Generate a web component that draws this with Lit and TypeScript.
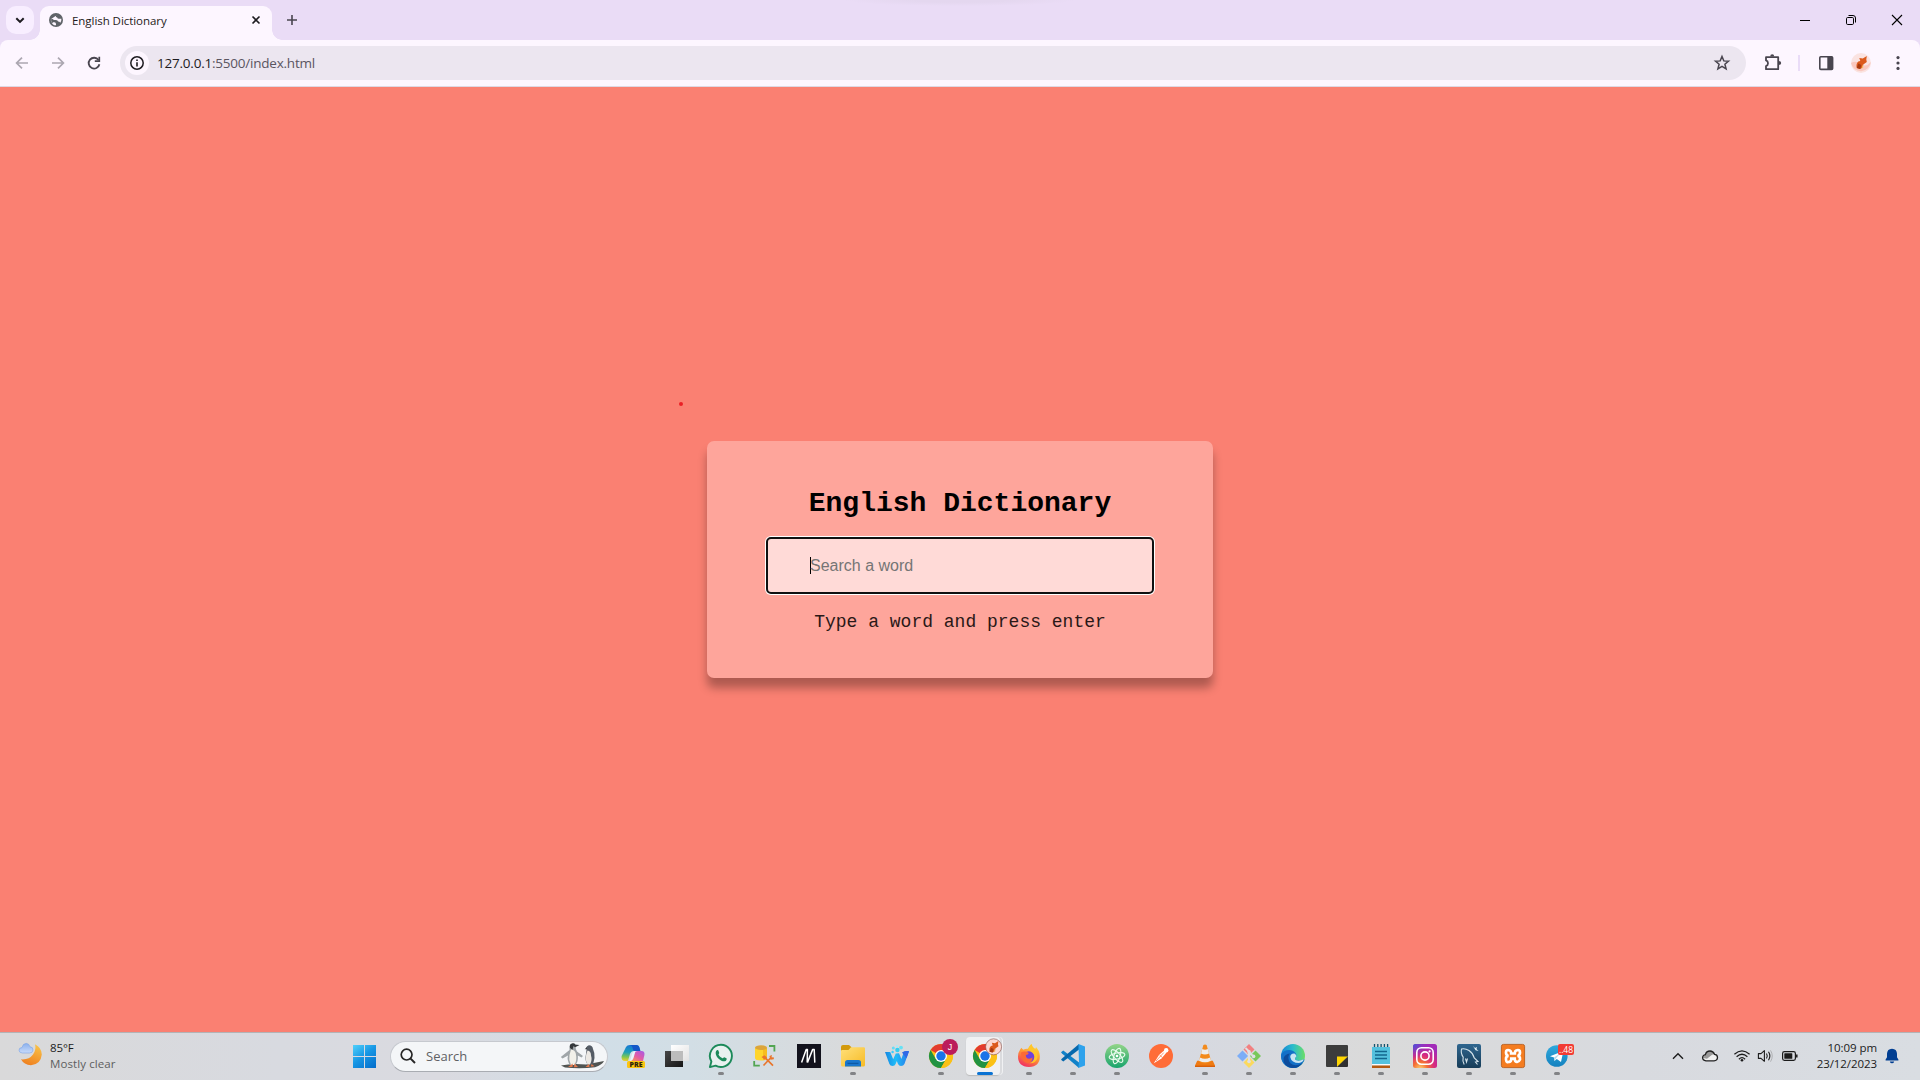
import { LitElement, html, svg, css, TemplateResult, SVGTemplateResult } from "lit";
import { customElement, state } from "lit/decorators.js";

interface TaskApp {
  name: string;
  art: SVGTemplateResult;
  running?: boolean;
  active?: boolean;
}

const chromeArt = svg`
  <circle cx="12" cy="12" r="12" fill="#fbc116"/>
  <path d="M12 12 1.6 6A12 12 0 0 1 22.4 6L12 6Z" fill="#e33b2e"/>
  <path d="M22.4 6H12L12 12Z" fill="#e33b2e"/>
  <path d="M1.6 6A12 12 0 0 0 12 24L17.2 15 12 12 6.8 15Z" fill="#229342"/>
  <path d="M22.4 6H12V12L17.2 15 12 24A12 12 0 0 0 22.4 6Z" fill="#fbc116"/>
  <circle cx="12" cy="12" r="6" fill="#fff"/>
  <circle cx="12" cy="12" r="4.7" fill="#1a73e8"/>`;

const dragonArt = svg`
  <path d="M-4.5 5.5C-5.5 2-4-1.5-1-1.5L-2-4.5 1.5-4 5.5-6.5 5-3 5.5-.5 2 2 1.5 5-1.5 6.5Z" fill="#dc5a1c"/>
  <path d="M-4.5 5.5-3 1 0 2.5-1 6.4Z" fill="#a83a12"/>
  <path d="M1.5 2 2 5 0 6.5Z" fill="#f2c26b"/>`;

const apps: TaskApp[] = [
  {
    name: "copilot",
    art: svg`
      <path d="M5 3Q6 1 9 1H15Q18 1 18.5 4L19 7H13Q10 7 9 10L7 17H4Q0 17 .6 12Z" fill="url(#cop1)"/>
      <path d="M9 1H15Q18 1 18.7 4.4L19.5 7H14Q12.5 7 12 5.5L11.4 3.2Q10.9 1.3 9 1Z" fill="#1457c8"/>
      <path d="M13 10Q14 7 17 7H20.5Q24 7 23.4 11L22 17H10Z" fill="url(#cop2)"/>
      <path d="M9 17 11 10Q12 7 14.5 7L12.5 14Q11.5 17 9 17Z" fill="#e9f3fb"/>
      <rect x="6" y="17" width="18" height="7" rx="1.6" fill="#fcc612"/>
      <text x="15" y="23" class="pre">PRE</text>`,
  },
  {
    name: "task-view",
    art: svg`
      <rect x="0" y="7" width="18" height="16" fill="url(#dark)"/>
      <rect x="6" y="1" width="18" height="16" fill="url(#pale)"/>
      <rect x="6" y="7" width="12" height="10" fill="#bcbcbc"/>`,
  },
  {
    name: "whatsapp",
    running: true,
    art: svg`
      <path d="M12 .8A11.1 11.1 0 1 1 6.6 21.7L.9 23.1 2.4 17.5A11.1 11.1 0 0 1 12 .8Z" fill="#e8f1ef" stroke="#1c8a5a" stroke-width="1.9" stroke-linejoin="round"/>
      <path d="M7.6 6.4C8.3 5.8 9.1 5.9 9.4 6.6L10.2 8.7C10.4 9.2 9.4 10.1 9.5 10.5 10.3 12.2 11.7 13.5 13.5 14.2 14 14.4 14.8 13 15.3 13.2L17.4 14.3C18.1 14.7 17.5 16.3 16.7 16.9 15 18 12.1 17 9.6 14.7 7 12.2 5.7 8.4 7.6 6.4Z" fill="#1c8a5a"/>`,
  },
  {
    name: "database-tools",
    art: svg`
      <path d="M2 4V14Q2 16.5 8 16.5T14 14V4Z" fill="#ffd52b"/>
      <path d="M10 4H14V14Q13 16 10 16.3Z" fill="#f7bd1e"/>
      <ellipse cx="8" cy="3.6" rx="6" ry="2.4" fill="#dca53a"/>
      <path d="M16 2H21.4V7.5M1.2 17V21.7H6.8" fill="none" stroke="#52a552" stroke-width="1.8"/>
      <path d="M10.5 21.5 18 13.5M11.5 13.2 20 21.7" stroke="#e8762d" stroke-width="1.7"/>
      <path d="M8.5 13 11.5 11.2 14 13.5 11.5 15.5ZM16.4 12 19 11 18.5 13.2 21 13.5 20.7 15.2 17.6 15.8Z" fill="#e8762d"/>`,
  },
  {
    name: "m-app",
    art: svg`
      <rect width="24" height="24" fill="#12121c"/>
      <path d="M4.6 18.6 9.2 5.6 10.4 5.6 10.2 18.6M10.4 18.6 15.6 5.6 17.2 5.6 17.8 18.6" fill="none" stroke="#fff" stroke-width="1.5" stroke-linejoin="round"/>`,
  },
  {
    name: "file-explorer",
    running: true,
    art: svg`
      <path d="M0 3Q0 1 2 1H8L10.5 3.2V7H0Z" fill="#d39a0c"/>
      <path d="M0 7Q0 6 1.2 6H7.5L10 3.2H22.8Q24 3.2 24 4.4V21Q24 22.5 22.5 22.5H1.5Q0 22.5 0 21Z" fill="url(#folder)"/>
      <path d="M4 22.5V18.5Q4 16 6.5 16H17.5Q20 16 20 18.5V22.5Z" fill="#1977cd"/>
      <path d="M6.5 19.4H17.5" stroke="#0d5aa5" stroke-width="1.3"/>`,
  },
  {
    name: "wave-w",
    art: svg`
      <path d="M0 8H5.2L8.2 15.2 10.8 9.5 14 9.3 16.4 15 18.8 8Q20 6.8 24 7.2L19.4 20Q18.5 22 16 22 14 22 13 20L11.8 17 10.6 20Q9.8 22 7.6 22 5.2 22 4.4 20Z" fill="url(#wave)"/>
      <path d="M17 8.5Q20 6.5 24 7.2L21.5 14.3Z" fill="#3168e6"/>
      <circle cx="12.4" cy="6" r="2.2" fill="#35cef1"/><circle cx="16" cy="3.6" r="1.9" fill="#67e1f4"/>
      <circle cx="8.3" cy="4" r="1.5" fill="#62dbf5"/><circle cx="12" cy="2" r="1" fill="#9defff"/><circle cx="7.6" cy="8" r="1.2" fill="#36cfff"/>`,
  },
  {
    name: "chrome-j",
    running: true,
    art: svg`${chromeArt}
      <circle cx="21" cy="3" r="8" fill="#bb1c5b"/>
      <text x="21" y="6" class="badge">J</text>`,
  },
  {
    name: "chrome-active",
    active: true,
    art: svg`${chromeArt}
      <circle cx="20.6" cy="2.8" r="8" fill="#fbd9d3" stroke="#83504a" stroke-width=".6"/>
      <g transform="translate(20.6 2.8) scale(.88)">${dragonArt}</g>`,
  },
  {
    name: "firefox",
    running: true,
    art: svg`
      <path d="M3.3 5.2 4.6 3.8Q5.2 5.2 6.4 5.8 8.5 4.5 11 4.8 12 2.5 14.4 0 15 3 18 5Q19 4 19 3 22.6 6.6 22.9 12 22.9 22.8 12 23 1 22.5 1 12.5 1 8.5 3.3 5.2Z" fill="url(#fox)"/>
      <path d="M14.4 0Q15 3 18 5 21.2 9 20.4 14 18.8 19.5 12.5 19.2 18.5 17 16.8 11.5 15 8 11 4.8 12 2.5 14.4 0Z" fill="#ffc62b"/>
      <circle cx="11.8" cy="12.8" r="5.5" fill="#7042dc"/>
      <path d="M4 8.5Q8 6.5 11.8 9 11.3 10.8 8.8 11 8.8 14.8 12.3 14.7 14.5 14.5 15.5 13.2 15.5 18.6 10.7 19.2 4 18 4 8.5Z" fill="#fb6a36"/>`,
  },
  {
    name: "vscode",
    running: true,
    art: svg`
      <path d="M0 8.2 2.3 6.6 18 18.5V24L1 9.6Z" fill="#1182c9"/>
      <path d="M0 15.8 2.3 17.4 18 5.5V0L1 14.4Z" fill="#0668ad"/>
      <path d="M17.4 0 24 2.6V21.4L17.4 24 18 18Z" fill="#2ea2ec"/>`,
  },
  {
    name: "atom",
    running: true,
    art: svg`
      <circle cx="12" cy="12" r="12" fill="url(#atom)"/>
      <g fill="none" stroke="#e9fbee" stroke-width="1.15">
        <ellipse cx="12" cy="12" rx="8" ry="3.1" transform="rotate(-12 12 12)"/>
        <ellipse cx="12" cy="12" rx="8" ry="3.1" transform="rotate(48 12 12)"/>
        <ellipse cx="12" cy="12" rx="8" ry="3.1" transform="rotate(108 12 12)"/>
      </g>
      <circle cx="12" cy="12" r="1.3" fill="#fff"/>`,
  },
  {
    name: "postman",
    art: svg`
      <circle cx="12" cy="12" r="12" fill="#ff6c37"/>
      <path d="M4.8 19.2 10.2 10.7 15.4 6.3 17.5 8.6 12.5 14.6Z" fill="#fff"/>
      <circle cx="17.2" cy="6.3" r="2.2" fill="#fff"/>
      <path d="M10.5 11 13.5 13.6M7 17 14.8 8.6" stroke="#ff6c37" stroke-width=".7"/>`,
  },
  {
    name: "vlc",
    running: true,
    art: svg`
      <path d="M4.2 16.8H19.8L22 21.5V23H2V21.5Z" fill="#ef7a12"/>
      <path d="M2 21.6H22V23H2Z" fill="#d85f08"/>
      <path d="M10.4 1Q12 .2 13.6 1L18.3 17.5Q12 21.5 5.7 17.5Z" fill="#f38b1c"/>
      <path d="M9.3 5.1Q12 6.4 14.8 5.1L16 9.5Q12 11.4 8 9.5ZM6.9 13.4Q12 16 17.1 13.4L18 16.7Q12 20 6 16.7Z" fill="#ededed"/>`,
  },
  {
    name: "git",
    running: true,
    art: svg`
      <path d="M12 0 17.5 5.5 12 11 6.5 5.5Z" fill="#f28080"/><path d="M18.5 6.5 24 12 18.5 17.5 13 12Z" fill="#79c85b"/>
      <path d="M12 13 17.5 18.5 12 24 6.5 18.5Z" fill="#fbd95d"/><path d="M5.5 6.5 11 12 5.5 17.5 0 12Z" fill="#7cadf7"/>
      <path d="M8.5 4 12 7.5V18M12 8 16.5 12.5" fill="none" stroke="#dfe0e4" stroke-width="2"/>
      <circle cx="12" cy="7.8" r="1.8" fill="#dfe0e4"/><circle cx="12" cy="17.5" r="1.8" fill="#dfe0e4"/><circle cx="16.6" cy="12.4" r="1.8" fill="#dfe0e4"/>`,
  },
  {
    name: "edge",
    running: true,
    art: svg`
      <circle cx="12" cy="12" r="12" fill="url(#edge1)"/>
      <path d="M.1 11Q2 6 8.5 6 14 6.5 15.4 11 15.5 12.5 14 14 13.4 15.5 16 16.4 20 17 22.8 15.2 24 15 23 17A12 12 0 0 1 .1 11Z" fill="#1370c8"/>
      <path d="M8.8 9.5Q5.5 14.5 9.5 19.2 14 23.3 21.5 19 17.5 24.6 11 24 1.5 22 2.6 14 4 10.3 8.8 9.5Z" fill="#0d4c9c"/>
      <path d="M9.2 13Q9.4 9.2 13.5 9.5 15.8 10.8 15.3 12.5 13 14.6 14.7 16 18 17.6 22.8 15.2 22 18.3 18 19 10.5 19 9.2 13Z" fill="#c9e4f2"/>`,
  },
  {
    name: "sticky-notes",
    running: true,
    art: svg`
      <path d="M1 2Q1 1 2 1H22Q23 1 23 2V12.5L12 23H2Q1 23 1 22Z" fill="#3c3c3c"/>
      <path d="M12 12.5H23L12 23Z" fill="#ffd500"/><path d="M23 12.5V22Q23 23 22 23H12Z" fill="#303030"/>`,
  },
  {
    name: "notepad",
    running: true,
    art: svg`
      <path d="M3 3H21V20H3Z" fill="#54c1de"/><path d="M3 20H21V21.5H3Z" fill="#fafafa"/><path d="M3 21.5H21V24H3Z" fill="#b35a12"/>
      <path d="M5.5 0V3M8.8 0V3M12.1 0V3M15.4 0V3M18.6 0V3" stroke="#15536e" stroke-width="1.3"/>
      <path d="M6 7.5H18M6 11H18M6 14.5H18" stroke="#12678e" stroke-width="1.5"/>`,
  },
  {
    name: "instagram",
    running: true,
    art: svg`
      <rect width="24" height="24" rx="2.5" fill="url(#ig1)"/><rect width="24" height="24" rx="2.5" fill="url(#ig2)"/>
      <rect x="3.8" y="3.8" width="16.4" height="16.4" rx="4.6" fill="none" stroke="#fff" stroke-width="1.6"/>
      <circle cx="12" cy="12" r="4.1" fill="none" stroke="#fff" stroke-width="1.6"/><circle cx="16.6" cy="7.4" r="1.1" fill="#fff"/>`,
  },
  {
    name: "mysql-workbench",
    running: true,
    art: svg`
      <rect width="24" height="24" rx="2" fill="url(#my)"/>
      <path d="M7.2 20.5Q5.2 17 6.2 13 3.5 9.5 4.5 5 8 4 12 6.5 16 9.2 17.3 14L21 17.5 18.5 18 20.5 20.5M8.5 14.5 9.5 18 10.5 14.5" fill="none" stroke="#d4e2ea" stroke-width="1.1"/>
      <path d="M16 2 18 4 20 3 19.5 5 21.5 7 18.6 6.2Z" fill="#e7f3f8"/>`,
  },
  {
    name: "xampp",
    running: true,
    art: svg`
      <rect x=".4" y=".4" width="23.2" height="23.2" rx="2" fill="#f47c20" stroke="#b95d1c" stroke-width=".9"/>
      <path d="M8 6.2Q5 5.5 5 8.5T7.6 12Q4.7 12 5 15.5T8.3 17.8Q10.4 17.4 10.3 14.7H13.7Q13.6 17.4 15.7 17.8T19 15.5Q19.3 12 16.4 12 19 11.5 19 8.5T16 6.2Q13.7 6.7 13.8 9.5H10.2Q10.3 6.7 8 6.2Z" fill="none" stroke="#fff" stroke-width="2.7"/>`,
  },
  {
    name: "telegram",
    running: true,
    art: svg`
      <circle cx="11.8" cy="12" r="10.8" fill="url(#tg)"/>
      <path d="M5 12.2 18.4 7 16 18 11.8 15 9.5 17 9 13.5Z" fill="#fff"/><path d="M9.1 13.5 15.6 9 11 14.2 9.5 17Z" fill="#b5d7ea"/>
      <rect x="13" y="0" width="16" height="11" rx="2" fill="#f23c34"/>
      <text x="21" y="8.6" class="count">..48</text>`,
  },
];

const defs = svg`
  <linearGradient id="cop1" x1=".3" y1="0" x2=".2" y2="1"><stop stop-color="#1877d4"/><stop offset=".45" stop-color="#1fa0b8"/><stop offset=".75" stop-color="#7ec651"/><stop offset="1" stop-color="#f1ce2a"/></linearGradient>
  <linearGradient id="cop2" x1="1" y1="0" x2=".2" y2="1"><stop stop-color="#a659e8"/><stop offset=".6" stop-color="#e35ba4"/><stop offset="1" stop-color="#f68f5e"/></linearGradient>
  <linearGradient id="dark" x1="0" y1="0" x2="1" y2="1"><stop stop-color="#474747"/><stop offset="1" stop-color="#161616"/></linearGradient>
  <linearGradient id="pale" x1="0" y1="0" x2="1" y2="1"><stop stop-color="#fff"/><stop offset="1" stop-color="#e2e2e2"/></linearGradient>
  <linearGradient id="folder" x1="0" y1="0" x2="1" y2="1"><stop stop-color="#ffe07a"/><stop offset="1" stop-color="#f7bb25"/></linearGradient>
  <linearGradient id="wave"><stop stop-color="#1687e2"/><stop offset=".45" stop-color="#20bdf8"/><stop offset="1" stop-color="#2878ea"/></linearGradient>
  <linearGradient id="fox" x1=".8" y1="0" x2=".3" y2="1"><stop stop-color="#ffe13c"/><stop offset=".5" stop-color="#ff9633"/><stop offset="1" stop-color="#f02c62"/></linearGradient>
  <linearGradient id="atom" x1="0" y1="0" x2="0" y2="1"><stop stop-color="#93d588"/><stop offset="1" stop-color="#18a46c"/></linearGradient>
  <linearGradient id="edge1"><stop stop-color="#1684d6"/><stop offset=".5" stop-color="#2bbccb"/><stop offset="1" stop-color="#6ade67"/></linearGradient>
  <radialGradient id="ig1" cx=".3" cy="1.05" r="1"><stop stop-color="#fed576"/><stop offset=".3" stop-color="#f47133"/><stop offset=".6" stop-color="#d92a7e"/><stop offset="1" stop-color="#a22bb8"/></radialGradient>
  <radialGradient id="ig2" cx="0" cy="0" r=".65"><stop stop-color="#4257d9"/><stop offset="1" stop-color="#8b35c8" stop-opacity="0"/></radialGradient>
  <linearGradient id="my" x1="0" y1="0" x2="0" y2="1"><stop stop-color="#2f668f"/><stop offset="1" stop-color="#173c58"/></linearGradient>
  <linearGradient id="tg" x1="0" y1="0" x2="0" y2="1"><stop stop-color="#2fa9dd"/><stop offset="1" stop-color="#1481bf"/></linearGradient>`;

@customElement("browser-chrome")
export class BrowserChrome extends LitElement {
  static styles = css`
    :host { display: block; font-family: "Open Sans", "Noto Sans", sans-serif; background: #eadcf6; }
    svg { display: block; overflow: visible; fill: none; }
    .strip {
      height: 40px; box-sizing: border-box; padding: 6px 0 0 6px; display: flex; align-items: stretch;
      background: radial-gradient(ellipse 115px 6px at 960px 0, #e4d7ef 40%, rgba(228, 215, 239, 0) 100%);
    }
    .list { width: 28px; height: 28px; border-radius: 10px; background: #f8eeff; display: grid; place-items: center; }
    .tab {
      margin-left: 6px; width: 232px; box-sizing: border-box; padding: 0 12px 6px 9px; background: #fdf6ff;
      border-radius: 9px 9px 0 0; display: flex; align-items: center; position: relative;
    }
    .tab::before, .tab::after { content: ""; position: absolute; bottom: 0; width: 10px; height: 10px; }
    .tab::before { right: 100%; background: radial-gradient(circle at 0 0, transparent 9.5px, #fdf6ff 10px); }
    .tab::after { left: 100%; background: radial-gradient(circle at 100% 0, transparent 9.5px, #fdf6ff 10px); }
    .title { margin-left: 9px; flex: 1; font-size: 11.5px; line-height: 16px; letter-spacing: -0.05px; color: #1d1b20; white-space: nowrap; padding-top: 1px; }
    .plus { margin: 9px 0 0 15px; }
    .win { margin-left: auto; display: flex; gap: 36px; padding: 9px 18px 0 0; }
    .bar {
      height: 47px; box-sizing: border-box; background: #fdf6ff; border-bottom: 1px solid #ded8e4; border-radius: 8px 8px 0 0;
      display: flex; align-items: center; padding: 0 12px;
    }
    .nav { display: flex; gap: 16px; }
    .omni {
      margin-left: 16px; width: 1626px; height: 34px; box-sizing: border-box; padding: 0 14px 0 5px; border-radius: 17px;
      background: #ece6f0; display: flex; align-items: center;
    }
    .info { width: 24px; height: 24px; border-radius: 50%; background: #fdf6ff; display: grid; place-items: center; }
    .url { flex: 1; margin-left: 8px; font-size: 13.5px; line-height: 20px; letter-spacing: -0.22px; color: #1d1b20; }
    .url span { color: #5a5560; }
    .tools { flex: 1; display: flex; align-items: center; }
    .ext { margin-left: 17px; }
    .rule { width: 2px; height: 16px; margin-left: 15px; background: #eadcf8; }
    .panel { margin-left: 16px; }
    .avatar { margin-left: 15px; }
    .more { margin-left: 17px; }
  `;

  render() {
    return html`
      <div class="strip">
        <div class="list"><svg width="10" height="10" viewBox="0 0 10 10"><path d="M1.3 3.2 5 6.9 8.7 3.2" stroke="#1d1b20" stroke-width="2"/></svg></div>
        <div class="tab">
          <svg width="14" height="14" viewBox="0 0 14 14">
            <circle cx="7" cy="7" r="7" fill="#5f6368"/>
            <path d="M8.4 1.7Q6.8 2.2 6.8 3.4 7 4.3 8 4.3 8.6 5.9 10.2 5.8H12.4Q12.6 8 11.3 9.7 10.5 8.6 9.1 8.5 8.8 6.9 7 6.9H5.2Q4 6.9 4 5.9L1.8 6.2Q1.6 8.6 3 10.4L4 9.2H5.4Q7 9.4 7 10.9V12.2Q5.6 12.4 4.4 11.7L3 10.4 1.8 6.2Z" fill="#fdf6ff"/>
          </svg>
          <div class="title">English Dictionary</div>
          <svg width="8" height="8" viewBox="0 0 8 8"><path d="M.5.5 7.5 7.5M7.5.5.5 7.5" stroke="#1d1b20" stroke-width="1.6"/></svg>
        </div>
        <svg class="plus" width="10" height="10" viewBox="0 0 10 10"><path d="M5 0V10M0 5H10" stroke="#49454f" stroke-width="1.6"/></svg>
        <div class="win">
          <svg width="10" height="10" viewBox="0 0 10 10"><path d="M0 5.5H10" stroke="#000"/></svg>
          <svg width="10" height="10" viewBox="0 0 10 10"><rect x=".5" y="2.5" width="7" height="7" rx="1.2" stroke="#000"/><path d="M2.5.5H7Q9.5.5 9.5 3V7.5" stroke="#000"/></svg>
          <svg width="10" height="10" viewBox="0 0 10 10"><path d="M0 0 10 10M10 0 0 10" stroke="#000" stroke-width="1.1"/></svg>
        </div>
      </div>
      <div class="bar">
        <div class="nav">
          <svg width="20" height="20" viewBox="0 0 20 20"><path d="M16 10H5M10 4.6 4.6 10 10 15.4" stroke="#aca7b1" stroke-width="1.7"/></svg>
          <svg width="20" height="20" viewBox="0 0 20 20"><path d="M4 10H15M10 4.6 15.4 10 10 15.4" stroke="#aca7b1" stroke-width="1.7"/></svg>
          <svg width="20" height="20" viewBox="0 0 20 20"><path d="M14.5 7A5.4 5.4 0 1 0 15.4 11.2" stroke="#49454f" stroke-width="1.8"/><path d="M15.3 3.8V8.2H10.8" stroke="#49454f" stroke-width="1.7"/></svg>
        </div>
        <div class="omni">
          <div class="info"><svg width="14" height="14" viewBox="0 0 14 14"><circle cx="7" cy="7" r="6.2" stroke="#1d1b20" stroke-width="1.5"/><path d="M7 6.2V10.4M7 3.6V5.1" stroke="#1d1b20" stroke-width="1.6"/></svg></div>
          <div class="url">127.0.0.1<span>:5500/index.html</span></div>
          <svg width="20" height="20" viewBox="0 0 20 20"><path d="M10 3.5 11.8 7.9 16.5 8.2 12.9 11.2 14.1 15.9 10 13.3 5.9 15.9 7.1 11.2 3.5 8.2 8.2 7.9Z" stroke="#49454f" stroke-width="1.5"/></svg>
        </div>
        <div class="tools">
          <svg class="ext" width="20" height="20" viewBox="0 0 20 20"><path d="M3 4.2H15.2V16.2H3V13Q5 12.4 5 10.2T3 7.4Z" stroke="#49454f" stroke-width="1.8" stroke-linejoin="round"/><path d="M7.2 3.6Q7.2 1.2 9.2 1.2T11.2 3.6ZM15.8 8.1Q18.2 8.1 18.2 10.1T15.8 12.1Z" fill="#49454f"/></svg>
          <div class="rule"></div>
          <svg class="panel" width="20" height="20" viewBox="0 0 20 20"><rect x="3.8" y="3.8" width="12.8" height="12.6" rx="1" stroke="#49454f" stroke-width="1.6"/><path d="M11.3 3.8H16.6V16.4H11.3Z" fill="#49454f"/></svg>
          <svg class="avatar" width="20" height="20" viewBox="0 0 20 20"><circle cx="10" cy="10" r="10" fill="#fae3e1"/><path d="M0 10Q5 7 10 11T19.8 9A10 10 0 0 1 0 10Z" fill="#fac8bf"/><g transform="translate(10.3 9.6)">${dragonArt}</g></svg>
          <svg class="more" width="20" height="20" viewBox="0 0 20 20"><circle cx="10" cy="4.6" r="1.6" fill="#49454f"/><circle cx="10" cy="10" r="1.6" fill="#49454f"/><circle cx="10" cy="15.4" r="1.6" fill="#49454f"/></svg>
        </div>
      </div>`;
  }
}

@customElement("dictionary-page")
export class DictionaryPage extends LitElement {
  @state() private word = "";

  static styles = css`
    :host { display: grid; place-items: center; background: salmon; position: relative; }
    .card {
      width: 506px; height: 237px; box-sizing: border-box; padding: 47px 59px 0; border-radius: 7px; background: #fea59b;
      box-shadow: 0 10px 10px rgba(0, 0, 0, 0.3); display: flex; flex-direction: column; align-items: center;
      font-family: "Liberation Mono", "Courier New", monospace; color: #000;
    }
    h1 { margin: 0; font-size: 28px; line-height: 32px; font-weight: 700; white-space: nowrap; }
    .field {
      margin-top: 17px; width: 388px; height: 57px; box-sizing: border-box; border: 2px solid #101010; border-radius: 5px;
      background: #ffdad7; box-shadow: 0 0 0 1px #fff; display: flex; align-items: center; padding-left: 42px;
    }
    .caret { width: 1px; height: 17px; background: #000; margin-right: -1px; }
    .hint { font: 16px "Liberation Sans", Arial, sans-serif; color: #757575; }
    .tip { margin-top: 18px; font-size: 18px; line-height: 20px; white-space: nowrap; color: #2a1817; }
    .dot { position: absolute; left: 679px; top: 315px; width: 4px; height: 4px; border-radius: 50%; background: #ea1f25; }
  `;

  render() {
    return html`
      <div class="card">
        <h1>English Dictionary</h1>
        <div class="field"><span class="caret"></span><span class="hint">${this.word || "Search a word"}</span></div>
        <div class="tip">Type a word and press enter</div>
      </div>
      <span class="dot"></span>`;
  }
}

@customElement("task-bar")
export class TaskBar extends LitElement {
  static styles = css`
    :host {
      display: flex; box-sizing: border-box; height: 48px; border-top: 1px solid #b3b3b6; font-family: "Open Sans", "Noto Sans", sans-serif;
      background: linear-gradient(90deg, #d9d9da 0, #d8dae0 280px, #dadae0 440px, #d1dee7 600px, #d2dee5 690px, #d9dadb 860px, #d6d9e1 1180px, #dadada 1370px, #d8dadf 1640px, #d9dde2 1920px);
    }
    svg { display: block; overflow: visible; fill: none; }
    .weather { width: 352px; display: flex; align-items: flex-start; padding: 9px 0 0 18px; box-sizing: border-box; }
    .lines { margin-left: 8px; font-size: 11.5px; line-height: 16px; letter-spacing: -0.1px; color: #1b1b1b; white-space: nowrap; margin-top: -2px; }
    .lines .sub { color: #5d5e60; letter-spacing: 0.1px; }
    .start { margin-top: 12px; }
    .search {
      margin: 8px 0 0 14px; width: 218px; height: 31px; box-sizing: border-box; border: 1px solid #c6c9cf; border-bottom-color: #a9acb2; border-radius: 16px;
      background: #f4f6f8; display: flex; align-items: center; padding: 0 3px 1px 9px;
    }
    .search .label { flex: 1; margin-left: 10px; font-size: 13px; line-height: 18px; color: #606164; }
    .apps { display: flex; margin-left: 3px; }
    .app { width: 44px; display: flex; flex-direction: column; align-items: center; padding-top: 11px; position: relative; height: 47px; box-sizing: border-box; }
    .app svg { position: relative; }
    .mark { margin-top: 4px; width: 6px; height: 3px; border-radius: 2px; background: #828386; }
    .active .mark { width: 16px; background: #0b73d3; position: relative; }
    .active::before {
      content: ""; position: absolute; left: 3px; top: 4px; width: 34px; height: 38px; border-radius: 4px;
      background: #f0f1f3; box-shadow: 2px 0 0 #dadbde, 3px 0 0 #f0f1f3, 0 1px 1px #bbb;
    }
    .pre { font: 800 7px "Open Sans", sans-serif; fill: #30240a; text-anchor: middle; }
    .badge { font: 9px "Liberation Sans", sans-serif; fill: #fff; text-anchor: middle; }
    .count { font: 8.5px "Open Sans", sans-serif; fill: #fff; text-anchor: middle; }
    .tray { margin-left: auto; display: flex; padding-right: 21px; }
    .icons { display: flex; padding-top: 13px; }
    .icons svg + svg { margin-left: 12px; }
    .icons svg.near { margin-left: 3px; }
    .icons svg.bat { margin-left: 5px; }
    .clock { width: 77px; padding-top: 7px; text-align: right; font-size: 11.5px; line-height: 16px; letter-spacing: -0.07px; color: #1b1b1b; white-space: nowrap; }
    .bell { margin: 15px 0 0 8px; }
  `;

  private item(app: TaskApp): TemplateResult {
    return html`<div class="app ${app.active ? "active" : ""}">
      <svg width="24" height="24" viewBox="0 0 24 24">${app.art}</svg>
      ${app.running || app.active ? html`<span class="mark"></span>` : ""}
    </div>`;
  }

  render() {
    return html`
      <div class="weather">
        <svg width="24" height="24" viewBox="0 0 24 24">
          <defs>
            <linearGradient id="moon" x1=".8" y1="0" x2=".4" y2="1"><stop stop-color="#f9c44a"/><stop offset="1" stop-color="#ef8221"/></linearGradient>
            <linearGradient id="cloud" x1="0" y1="0" x2="0" y2="1"><stop stop-color="#8bb0ec"/><stop offset="1" stop-color="#c8dbfa"/></linearGradient>
            ${defs}
          </defs>
          <path d="M17 2.2Q23.7 5.5 23.8 12.5 22.8 22.4 13 23.2 6 23 3 17.3 11 18 15 12.5 18.5 7.5 17 2.2Z" fill="url(#moon)"/>
          <path d="M4.5 11Q1 10.8 1 8.2T4 5.6Q4.8 1.5 8.2 1.4 11 1.4 12 4.8 15.2 5 15 8 14.8 11 11.5 11Z" fill="url(#cloud)" stroke="#7aa2e6" stroke-width=".6"/>
        </svg>
        <div class="lines"><div>85°F</div><div class="sub">Mostly clear</div></div>
      </div>
      <svg class="start" width="24" height="24" viewBox="0 0 24 24">
        <defs><linearGradient id="win" gradientUnits="userSpaceOnUse" x1="1" y1="0" x2="20" y2="24"><stop stop-color="#4fd0fb"/><stop offset=".5" stop-color="#1796e4"/><stop offset="1" stop-color="#0570cd"/></linearGradient></defs>
        <path d="M1 0H12V11H1ZM13 0H24V11H13ZM1 12H12V23H1ZM13 12H24V23H13Z" fill="url(#win)"/>
      </svg>
      <div class="search">
        <svg width="16" height="16" viewBox="0 0 16 16"><circle cx="6.6" cy="6.6" r="5.4" stroke="#262626" stroke-width="1.7"/><path d="M10.6 10.6 15 15" stroke="#262626" stroke-width="2"/></svg>
        <span class="label">Search</span>
        <svg width="44" height="26" viewBox="0 0 44 26">
          <path d="M1 22.5Q12 20 26 21.5L44 18Q42 22 35 24.3 20 26 5 24.5Z" fill="#505452"/>
          <path d="M9.5 7Q9 2 11.5 1 13.5-.2 15 1.5L19 2 15.6 3.4Q15.4 6 17 8.5L23 13 21.5 14.5 17.8 12.5Q18.5 18 15.5 22H10Q6.6 17 8 12.5L2.5 15.5.8 14Z" fill="#9fa5a8"/>
          <path d="M11 6.5Q15 7 15.8 10.5 17.3 17 14.5 22H11Q8.4 17 9.5 12Z" fill="#f2f1ea"/>
          <path d="M10 5Q9 1 12 .4 14.5 0 15.5 1.7L19.5 1.9 15 4.2 13.5 3 12.5 6.8Z" fill="#34383b"/>
          <path d="M26.5 7Q25.5 3.4 28.3 2.4 32.4 2 33 6 35 10 34.5 15L33 21.5H27.5Q24.5 17 26 11Z" fill="#555c65"/>
          <path d="M27.5 7.5Q31 8 31 12.5 32.5 17 30 21.5H27.5Q24.8 17 26.3 11Z" fill="#ece9e4"/>
          <path d="M27 6 24.8 6.2 26.8 4Z" fill="#34383b"/>
          <path d="M8 24 12.8 20.6 12.5 24ZM14 24.2 14.5 20.6 18 24ZM25.5 24 29 21 29.5 24ZM31 23.5 31.5 21 34.5 23.3Z" fill="#e5794c"/>
        </svg>
      </div>
      <div class="apps">
        ${apps.map((a) => this.item(a))}
      </div>
      <div class="tray">
        <div class="icons">
          <svg width="20" height="20" viewBox="0 0 20 20"><path d="M5 12.8 10 7.8 15 12.8" stroke="#1b1b1b" stroke-width="1.4"/></svg>
          <svg width="20" height="20" viewBox="0 0 20 20"><path d="M6 14.8Q2.5 14.6 2.6 11.6 2.8 9 5.4 8.6 6.3 5 10 5 13.2 5 14.5 8.3 17.5 8.5 17.5 11.6 17.4 14.7 14 14.8Z" fill="#f1f1f1"/><path d="M5.4 8.6Q6.3 5 10 5 13.2 5 14.5 8.3 12.5 8.3 11.4 9.3L7 12.8 3 12Z" fill="#999"/><path d="M6 14.8Q2.5 14.6 2.6 11.6 2.8 9 5.4 8.6 6.3 5 10 5 13.2 5 14.5 8.3 17.5 8.5 17.5 11.6 17.4 14.7 14 14.8Z" stroke="#222" stroke-width="1.3"/></svg>
          <svg width="20" height="20" viewBox="0 0 20 20"><path d="M2.4 8.2Q10 1.4 17.6 8.2M4.6 10.7Q10 5.8 15.4 10.7M6.9 13.2Q10 10.2 13.1 13.2" stroke="#1b1b1b" stroke-width="1.2"/><circle cx="10" cy="14.3" r="1.3" fill="#1b1b1b"/></svg>
          <svg class="near" width="20" height="20" viewBox="0 0 20 20"><path d="M3.4 7.6H6L9.4 4.7V15.3L6 12.4H3.4Z" stroke="#1b1b1b" stroke-width="1.1" stroke-linejoin="round"/><path d="M11.5 7.5Q13 10 11.5 12.5M13.5 5.8Q16.2 10 13.5 14.2" stroke="#1b1b1b" stroke-width="1.1"/><path d="M15.5 4.3Q19 10 15.5 15.7" stroke="#b0b1b4"/></svg>
          <svg class="bat" width="20" height="20" viewBox="0 0 20 20"><rect x="2.6" y="5.6" width="12.8" height="8.8" rx="1.8" stroke="#1b1b1b" stroke-width="1.2"/><rect x="4.3" y="7.2" width="8" height="5.6" rx=".6" fill="#1b1b1b"/><path d="M16.8 8.4V11.6" stroke="#1b1b1b" stroke-width="1.5"/></svg>
        </div>
        <div class="clock"><div>10:09 pm</div><div>23/12/2023</div></div>
        <svg class="bell" width="14" height="16" viewBox="0 0 14 16"><path d="M7 .8Q11.8 1 12 5.8V9.3L13.4 11.6V12.4H.6V11.6L2 9.3V5.8Q2.2 1 7 .8Z" fill="#003e92"/><path d="M4.8 13.4H9.2Q8.7 15.3 7 15.3T4.8 13.4Z" fill="#003e92"/></svg>
      </div>`;
  }
}

@customElement("app-root")
export class AppRoot extends LitElement {
  static styles = css`
    :host { display: grid; grid-template-rows: 87px 945px 48px; width: 1920px; height: 1080px; overflow: hidden; }
  `;

  render() {
    return html`<browser-chrome></browser-chrome><dictionary-page></dictionary-page><task-bar></task-bar>`;
  }
}
